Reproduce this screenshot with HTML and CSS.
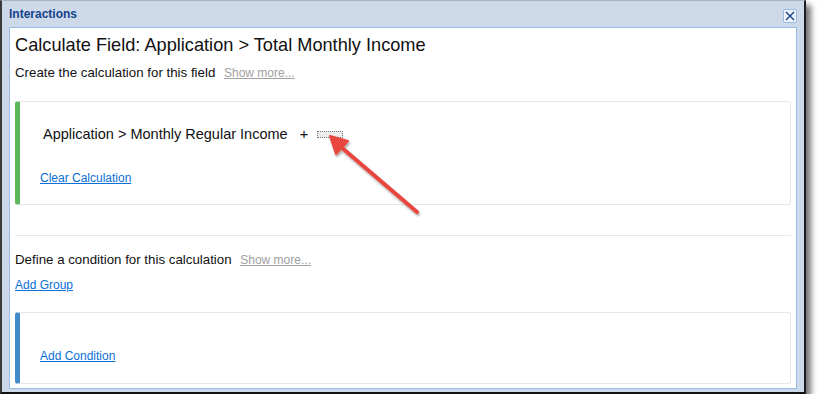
FILE: index.html
```html
<!DOCTYPE html>
<html lang="en">
<head>
    <meta charset="UTF-8">
    <title>Interactions</title>
    <link rel="stylesheet" href="styles.css">
</head>
<body>
<div class="window">
    <div class="window-title">
        <span>Interactions</span>
        <a href="#" class="close-btn" title="Close">
            <svg width="10" height="10" viewBox="0 0 10 10"><path d="M1 1L9 9M9 1L1 9" stroke="#15428b" stroke-width="1.4"/></svg>
        </a>
    </div>

    <div class="window-body">
        <h1 class="field-title">Calculate Field: Application &gt; Total Monthly Income</h1>
        <p class="hint hint-first">Create the calculation for this field <a href="#" class="show-more">Show more...</a></p>

        <div class="card card-green">
            <div class="calc-line">
                <span>Application &gt; Monthly Regular Income</span>
                <span class="plus">+</span>
                <span class="drop-slot"></span>
            </div>
            <a href="#" class="link">Clear Calculation</a>
        </div>

        <hr class="divider">

        <p class="hint hint-cond">Define a condition for this calculation <a href="#" class="show-more">Show more...</a></p>
        <a href="#" class="link add-group">Add Group</a>

        <div class="card card-blue">
            <a href="#" class="link">Add Condition</a>
        </div>

        <!-- callout arrow -->
        <svg class="callout" width="100" height="90" viewBox="0 0 100 90">
            <defs>
                <filter id="shadow" x="-20%" y="-20%" width="140%" height="140%">
                    <feDropShadow dx="1" dy="2" stdDeviation="1.2" flood-color="#000" flood-opacity="0.35"/>
                </filter>
            </defs>
            <g filter="url(#shadow)">
                <line x1="90" y1="80" x2="14" y2="15" stroke="#e8473f" stroke-width="4" stroke-linecap="round"/>
                <polygon points="3,4 21,9 9,22" fill="#e8473f" stroke="#e8473f" stroke-width="2" stroke-linejoin="round"/>
            </g>
        </svg>
    </div>
</div>
</body>
</html>
```

FILE: styles.css
```css
body {
    margin: 0;
    background: #fff;
    font-family: 'Liberation Sans', Arial, sans-serif;
    color: #111;
}

.window {
    width: 788px;
    height: 388px;
    background: #cdd9e8;
    border-top: 1px solid #a9b4c2;
    border-left: 2px solid #3a3a3a;
    border-right: 2px solid #1e1e1e;
    border-bottom: 2px solid #111;
    box-shadow: 5px 5px 6px rgba(0, 0, 0, 0.55);
    display: flex;
    flex-direction: column;
    padding: 0 7px 3px 7px;
}

.window-title {
    height: 26px;
    flex: none;
    display: flex;
    align-items: center;
    justify-content: space-between;
    font-size: 12px;
    font-weight: bold;
    color: #15428b;
}

.close-btn {
    width: 12px;
    height: 12px;
    border: 1px solid #99bbe8;
    border-radius: 2px;
    background: #eef3fa;
    display: flex;
    align-items: center;
    justify-content: center;
    margin-top: 3px;
}

.window-body {
    position: relative;
    flex: 1;
    background: #fff;
    border: 1px solid #99bbe8;
    padding: 0 5px;
    overflow: hidden;
}

.field-title {
    margin: 6px 0 0 0;
    font-size: 18.2px;
    font-weight: normal;
    line-height: 22px;
}

.hint {
    margin: 0;
    font-size: 13.3px;
    line-height: 16px;
}

.hint-first {
    margin-top: 9px;
}

.hint-cond {
    margin-top: 16px;
}

.show-more {
    color: #a0a0a0;
    font-size: 12px;
    margin-left: 5px;
}

.card {
    border: 1px solid #e6e6e6;
    border-left: 5px solid #5cb85c;
    border-radius: 3px;
    box-sizing: border-box;
}

.card-green {
    height: 104px;
    margin-top: 20px;
    padding-left: 20px;
}

.card-blue {
    height: 72px;
    margin-top: 19px;
    padding: 33px 0 0 20px;
    border-left-color: #428bca;
}

.calc-line {
    display: flex;
    align-items: center;
    font-size: 14.5px;
    line-height: 18px;
    margin: 23px 0 0 3px;
}

.plus {
    margin-left: 12px;
}

.drop-slot {
    width: 24px;
    height: 5px;
    border: 1px dotted #777;
    background: #ececec;
    margin-left: 9px;
}

.link {
    color: #0a6fd6;
    font-size: 12px;
    line-height: 14px;
    display: inline-block;
}

.card-green .link {
    margin-top: 28px;
}

.divider {
    border: 0;
    border-top: 1px solid #e8e8e8;
    margin: 30px 0 0 0;
}

.add-group {
    margin-top: 10px;
}

.callout {
    position: absolute;
    left: 317px;
    top: 104px;
}
```
